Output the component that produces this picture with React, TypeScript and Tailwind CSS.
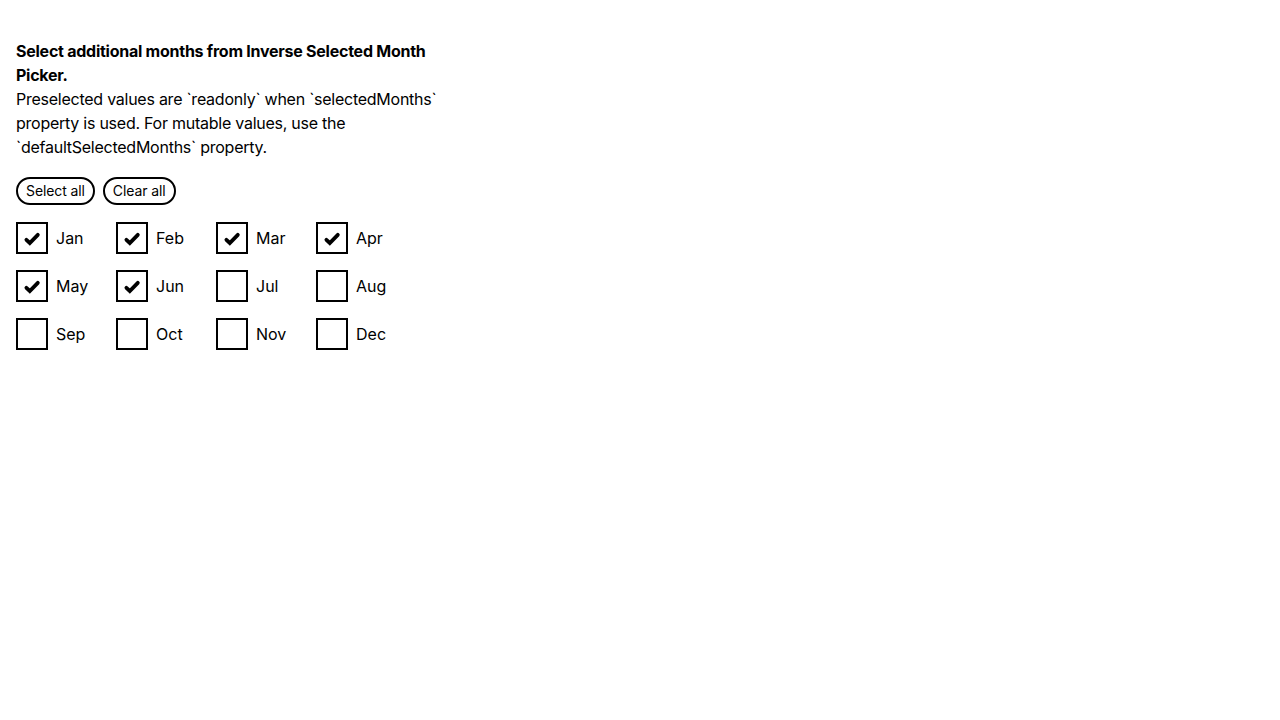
const MONTHS = ["Jan", "Feb", "Mar", "Apr", "May", "Jun", "Jul", "Aug", "Sep", "Oct", "Nov", "Dec"];
const SELECTED = ["Jan", "Feb", "Mar", "Apr", "May", "Jun"];

function Check() {
  return (
    <svg width="18" height="16" viewBox="0 0 18 16" className="mt-[2px]">
      <path d="M3.4 8.8 L6.8 12 L14.8 3.8" fill="none" stroke="#000" strokeWidth="3.8" strokeLinecap="round" strokeLinejoin="miter" />
    </svg>
  );
}

export default function App() {
  return (
    <div className="min-h-screen bg-white px-4 pt-[39px] text-black" style={{ fontFamily: "Inter, 'Noto Sans', sans-serif" }}>
      <div className="text-base leading-6 tracking-[-0.25px] whitespace-nowrap">
        <p className="font-bold">
          Select additional months from Inverse Selected Month
          <br />
          Picker.
        </p>
        <p>
          Preselected values are `readonly` when `selectedMonths`
          <br />
          property is used. For mutable values, use the
          <br />
          `defaultSelectedMonths` property.
        </p>
      </div>
      <div className="mt-[18px] flex gap-2">
        <button className="h-[28px] rounded-full border-2 border-black px-2 text-sm tracking-[-0.1px]">Select all</button>
        <button className="h-[28px] rounded-full border-2 border-black px-2 text-sm tracking-[-0.1px]">Clear all</button>
      </div>
      <div className="mt-[17px] grid w-[400px] grid-cols-4 gap-y-4">
        {MONTHS.map((m) => (
          <label key={m} className="flex items-center gap-2">
            <span className="flex h-8 w-8 items-center justify-center border-2 border-black">
              {SELECTED.includes(m) && <Check />}
            </span>
            <span className="text-base">{m}</span>
          </label>
        ))}
      </div>
    </div>
  );
}
